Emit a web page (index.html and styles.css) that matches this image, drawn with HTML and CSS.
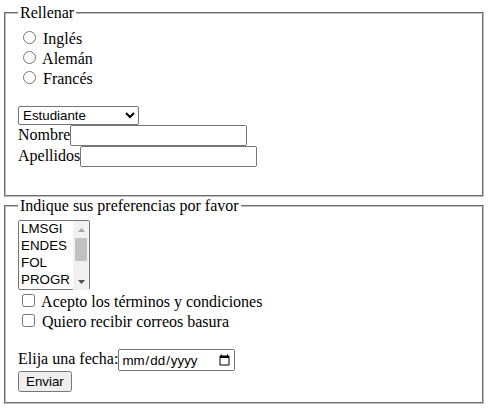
FILE: index.html
```html
<!DOCTYPE html>
<html lang="es">
<head>
<meta charset="utf-8">
<title>Formulario</title>
<link rel="stylesheet" href="styles.css">
</head>
<body>
<form class="form">
  <fieldset class="box">
    <legend class="box-title">Rellenar</legend>
    <input type="radio" name="idioma" class="radio"> Inglés<br>
    <input type="radio" name="idioma" class="radio"> Alemán<br>
    <input type="radio" name="idioma" class="radio"> Francés<br>
    <br>
    <select class="control role">
      <option>Estudiante</option>
      <option>Profesor</option>
    </select><br>
    <label>Nombre</label><input type="text" class="control text"><br>
    <label>Apellidos</label><input type="text" class="control text"><br>
    <br>
  </fieldset>
  <fieldset class="box">
    <legend class="box-title">Indique sus preferencias por favor</legend>
    <span class="listwrap"><select multiple size="4" class="control list">
      <option>LMSGI</option>
      <option>ENDES</option>
      <option>FOL</option>
      <option>PROGR</option>
      <option>BBDD</option>
      <option>SISIN</option>
      <option>EIE</option>
      <option>ING</option>
      <option>DAW</option>
    </select><span class="scroll" aria-hidden="true"><span class="scroll-btn"><svg width="7" height="4" viewBox="0 0 7 4"><path d="M0 4L3.5 0L7 4Z" fill="#a3a3a3"/></svg></span><span class="scroll-track"><span class="scroll-thumb"></span></span><span class="scroll-btn"><svg width="7" height="4" viewBox="0 0 7 4"><path d="M0 0L3.5 4L7 0Z" fill="#505050"/></svg></span></span></span><br>
    <input type="checkbox" class="check"> Acepto los términos y condiciones<br>
    <input type="checkbox" class="check"> Quiero recibir correos basura<br>
    <br>
    Elija una fecha:<input type="date" class="control date"><br>
    <button type="submit" class="control send">Enviar</button>
  </fieldset>
</form>
</body>
</html>
```

FILE: styles.css
```css
body {
  margin: 4px 4px 0 2px;
  font-family: "Liberation Serif", "Times New Roman", serif;
  font-size: 16px;
  color: #000;
  background: #fff;
}
.form {
  margin: 0;
}
.box {
  margin: 0 2px;
  border: 2px groove #c0c0c0;
}
.control {
  font-family: "Liberation Sans", Arial, sans-serif;
  font-size: 13.3333px;
}
.role {
  width: 121px;
  height: 19px;
}
.text {
  width: 177px;
  box-sizing: border-box;
  height: 21px;
}
.listwrap {
  position: relative;
  display: inline-block;
}
.list {
  width: 72px;
  height: 70px;
  margin: 0;
}
.scroll {
  position: absolute;
  top: 1px;
  bottom: 1px;
  right: 1px;
  width: 16px;
  background: #f1f1f1;
  display: flex;
  flex-direction: column;
}
.scroll-btn {
  height: 17px;
  display: flex;
  align-items: center;
  justify-content: center;
}
.scroll-btn svg {
  display: block;
}
.scroll-track {
  flex: 1;
  display: flex;
  flex-direction: column;
}
.scroll-thumb {
  height: 23px;
  margin: 0 2px;
  background: #c1c1c1;
}
.date {
  width: 117px;
  box-sizing: border-box;
  height: 22px;
}
```
